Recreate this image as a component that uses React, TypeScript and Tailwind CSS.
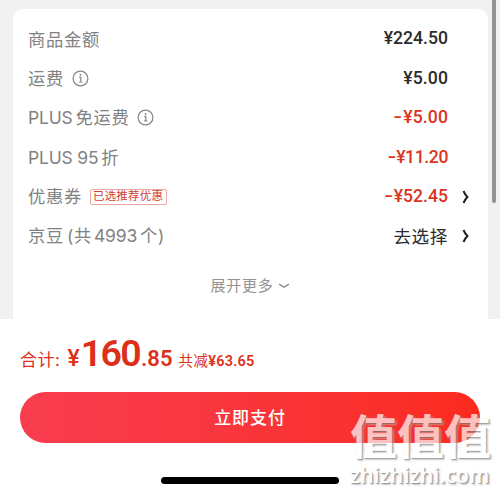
import type { ReactNode } from 'react';

interface PriceRow {
  label: ReactNode;
  value: ReactNode;
  valueClass: string;
  info?: boolean;
  tag?: string;
  arrow?: boolean;
}

const DARK = "text-[#2b2b2b] font-['Roboto','Noto_Sans_CJK_SC',sans-serif] font-medium";
const RED = "text-[#dc3422] font-['Roboto','Noto_Sans_CJK_SC',sans-serif] font-medium";
const PLAIN = "text-[#2b2b2b] font-['Noto_Sans_CJK_SC',sans-serif] tracking-[0.6px]";

const Latin = ({ children }: { children: ReactNode }) => (
  <span className="text-[17.5px] tracking-[-0.2px]">{children}</span>
);

const Minus = () => <span className="mr-[1px] inline-block origin-right scale-x-140">-</span>;

const rows: PriceRow[] = [
  { label: '商品金额', value: '¥224.50', valueClass: `${DARK} tracking-[0px]` },
  { label: '运费', value: '¥5.00', valueClass: `${DARK} tracking-[0.1px]`, info: true },
  {
    label: (
      <>
        <Latin>PLUS</Latin>
        <span className="ml-[3px]">免运费</span>
      </>
    ),
    value: <><Minus />¥5.00</>,
    valueClass: `${RED} tracking-[0.1px]`,
    info: true,
  },
  {
    label: (
      <>
        <Latin>PLUS 95</Latin>
        <span className="ml-[3px]">折</span>
      </>
    ),
    value: <><Minus />¥11.20</>,
    valueClass: `${RED} tracking-[-0.4px]`,
  },
  {
    label: '优惠券',
    value: <><Minus />¥52.45</>,
    valueClass: `${RED} tracking-[0px]`,
    tag: '已选推荐优惠',
    arrow: true,
  },
  {
    label: (
      <>
        京豆<span className="ml-[3px]">(</span>共
        <span className="ml-[2px] mr-[3px]">
          <Latin>4993</Latin>
        </span>
        个)
      </>
    ),
    value: '去选择',
    valueClass: PLAIN,
    arrow: true,
  },
];

const InfoIcon = () => (
  <svg className="ml-[8px] size-[17px]" viewBox="0 0 17 17" fill="none" stroke="#858585" strokeWidth="1.2">
    <circle cx="8.5" cy="8.5" r="7.4" />
    <path d="M7.2 7.4H8.8V11.8M7 12H10.4" />
    <circle cx="8.5" cy="5" r="0.9" fill="#858585" stroke="none" />
  </svg>
);

const Chevron = () => (
  <svg className="h-[14px] w-[8px]" viewBox="0 0 8 14" fill="none" stroke="#222" strokeWidth="2">
    <path d="M1.5 1 Q3 4.5 5.4 7 Q3 9.5 1.5 13" />
  </svg>
);

const Row = ({ row }: { row: PriceRow }) => (
  <div className="flex h-[39.4px] items-center pl-[15px] pr-[18px]">
    <div className="flex flex-1 items-center whitespace-nowrap text-[17.3px] leading-none tracking-[0.7px] text-[#828282]">
      <span className="whitespace-pre">{row.label}</span>
      {row.info && <InfoIcon />}
      {row.tag && (
        <span className="ml-[8px] flex h-[16px] items-center rounded-[2px] border border-[#e8aaa3] pl-[2px] pr-[3px] text-[11.5px] tracking-[0.2px] text-[#d2402f]">
          {row.tag}
        </span>
      )}
    </div>
    <span className={`text-[17.6px] leading-none ${row.valueClass}`}>{row.value}</span>
    <div className="flex w-[22px] justify-end">{row.arrow && <Chevron />}</div>
  </div>
);

const App = () => {
  return (
    <div className="relative flex h-[494px] w-[500px] flex-col overflow-hidden bg-white font-['Inter','Noto_Sans_CJK_SC',sans-serif]">
      <div className="h-[319px] bg-[#f1f1f1] pl-[13px] pr-[12px] pt-[9px]">
        <div className="h-full rounded-t-[10px] bg-white pt-[10.5px]">
          {rows.map((row, i) => (
            <Row key={i} row={row} />
          ))}
          <div className="flex h-[61px] items-center justify-center text-[15px] tracking-[0.7px] text-[#929292]">
            展开更多
            <svg className="ml-[5px] h-[6px] w-[12px]" viewBox="0 0 12 6" fill="none" stroke="#929292" strokeWidth="1.5">
              <path d="M1 1.2 Q3.5 2.6 6 4.2 Q8.5 2.6 11 1.2" />
            </svg>
          </div>
        </div>
      </div>

      <div className="flex h-[68px] items-baseline whitespace-nowrap pl-[20px] leading-[69px] text-[#dc3018]">
        <span className="text-[17px] tracking-[0.5px]">合计:</span>
        <span className="ml-[7px] font-['Roboto',sans-serif] text-[23px] font-medium">¥</span>
        <span className="ml-px font-['Roboto',sans-serif] text-[37.5px] font-semibold tracking-[-1.6px]">160</span>
        <span className="ml-px font-['Roboto',sans-serif] text-[22px] font-semibold">.85</span>
        <span className="ml-[6px] text-[14.5px] tracking-[0.4px]">共减</span>
        <span className="font-['Roboto',sans-serif] text-[14.5px] font-semibold tracking-[0.2px]">¥63.65</span>
      </div>

      <div className="px-5 pt-[5px]">
        <button className="flex h-[51px] w-full items-center justify-center rounded-full bg-linear-to-r from-[#f83d4f] to-[#fb2b1c] pt-[2px] text-[17px] font-medium tracking-[0.9px] text-white">
          立即支付
        </button>
      </div>
      <div className="mx-auto mt-[34px] h-[7px] w-[178px] rounded-full bg-black" />

      {/* scroll thumb */}
      <div className="absolute right-[4px] -top-1 h-[207px] w-[4px] rounded-full bg-[#929292]" />

      {/* watermark */}
      <div className="absolute left-[350px] top-[409px] whitespace-nowrap text-white opacity-70">
        <div className="font-['Noto_Sans_CJK_SC',sans-serif] text-[47px] font-bold leading-[50px] [text-shadow:1px_1px_1px_#777,2px_2px_2px_#bbb]">
          值值值
        </div>
        <div className="mt-[4px] font-['Open_Sans',sans-serif] text-[21px] font-semibold leading-[24px] tracking-[0.2px] [text-shadow:1px_1px_1px_#666,2px_2px_2px_#bbb]">
          zhizhizhi.com
        </div>
      </div>
    </div>
  );
};

export default App;
